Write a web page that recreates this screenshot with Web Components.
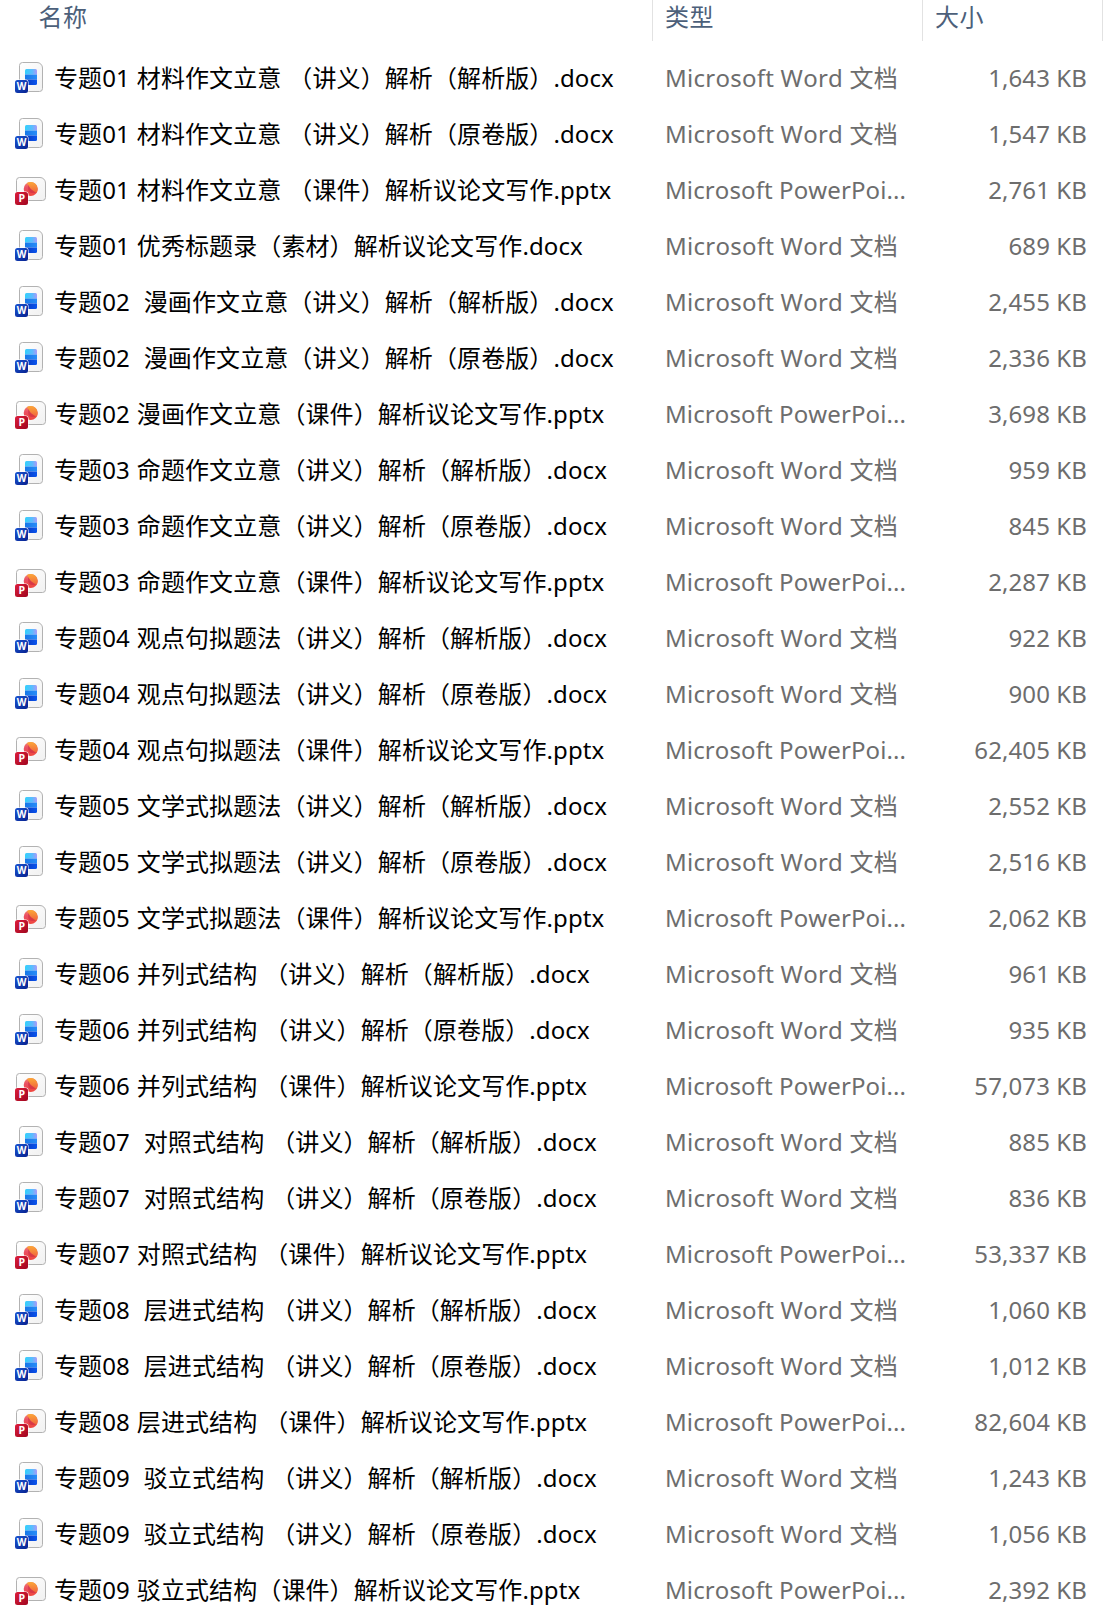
<!DOCTYPE html>
<html lang="zh-CN">
<head>
<meta charset="UTF-8">
<title>文件列表</title>
<style>
    html, body {
        margin: 0;
        height: 100%;
        overflow: hidden;
        background: #fff;
    }

    body {
        font: 24px/34px "Noto Sans", "Noto Sans CJK SC", sans-serif;
        font-kerning: none;
    }
</style>
</head>
<body>
<file-list></file-list>

<script>
/* File type icon: Word page or PowerPoint slide with its letter badge */

class FileIcon extends HTMLElement {
    constructor() {
        super();
        this.attachShadow({ mode: 'open' });
    }

    connectedCallback() {
        const word = `
            <path d="M7.5 11.500H22a5.500 5.500 0 0 1 5.500 5.500v20.500a3 3 0 0 1-3 3h-17a3 3 0 0 1-3-3v-23a3 3 0 0 1 3-3z" fill="url(#page)" stroke="#b2b2b2"/>
            <path d="M10 23.500v-4a1.500 1.500 0 0 1 1.500-1.500h9a1.500 1.500 0 0 1 1.500 1.500v4z" fill="url(#top)"/>
            <path d="M10 23.500h12v5H10z" fill="url(#mid)"/>
            <path d="M10 28.500h12v4a1.500 1.500 0 0 1-1.500 1.500h-9a1.500 1.500 0 0 1-1.500-1.500z" fill="url(#low)"/>
            <rect x="-.5" y="28.500" width="14" height="14" rx="3" fill="#fff"/>
            <rect x="0" y="29" width="13" height="13" rx="2.500" fill="url(#wbadge)"/>
            <text x="6.500" y="39.300" font-size="10">W</text>`;
        const slide = `
            <path d="M4.500 14.500H25a5.500 5.500 0 0 1 5.500 5.500v14.500a3 3 0 0 1-3 3h-23a3 3 0 0 1-3-3v-17a3 3 0 0 1 3-3z" fill="url(#page)" stroke="#b2b2b2"/>
            <circle cx="15.700" cy="26" r="7" fill="url(#pie)"/>
            <path d="M15.700 26l-3.800-5.900A7 7 0 0 1 21.200 30.300z" fill="url(#slice)"/>
            <path d="M15.700 26l-2.500-3.900v4.400a4 4 0 0 0 4 3.500l4-.2z" fill="#c8283c" opacity=".55"/>
            <rect x="-.5" y="28.500" width="14" height="14" rx="3" fill="#fff"/>
            <rect x="0" y="29" width="13" height="13" rx="2.500" fill="url(#pbadge)"/>
            <text x="6.700" y="39.300" font-size="10.500">P</text>`;

        this.shadowRoot.innerHTML = `
            <style>
                :host {
                    display: block;
                    width: 32px;
                    height: 56px;
                }

                svg {
                    display: block;
                    overflow: visible;
                }

                text {
                    font-family: "Open Sans", sans-serif;
                    font-weight: 700;
                    letter-spacing: 0;
                    fill: #fff;
                    text-anchor: middle;
                }
            </style>
            <svg width="32" height="56" viewBox="0 0 32 56">
                <defs>
                    <linearGradient id="page" x1="0" y1="0" x2="1" y2="1"><stop stop-color="#fff"/><stop offset="1" stop-color="#f1f1f1"/></linearGradient>
                    <linearGradient id="top"><stop stop-color="#32d0fb"/><stop offset=".6" stop-color="#5bbcff"/><stop offset="1" stop-color="#a89af8"/></linearGradient>
                    <linearGradient id="mid"><stop stop-color="#1677e8"/><stop offset="1" stop-color="#288cf8"/></linearGradient>
                    <linearGradient id="low"><stop stop-color="#0638c0"/><stop offset="1" stop-color="#0a55ee"/></linearGradient>
                    <linearGradient id="wbadge" x1="0" y1="0" x2="1" y2="1"><stop stop-color="#1c55d0"/><stop offset="1" stop-color="#06218f"/></linearGradient>
                    <linearGradient id="pie" x1="0" y1="0" x2="0" y2="1"><stop stop-color="#f4856c"/><stop offset=".4" stop-color="#ea5064"/><stop offset="1" stop-color="#f0463c"/></linearGradient>
                    <linearGradient id="slice" x1="0" y1="0" x2="0" y2="1"><stop stop-color="#fba838"/><stop offset="1" stop-color="#f0603c"/></linearGradient>
                    <linearGradient id="pbadge" x1="0" y1="0" x2="1" y2="1"><stop stop-color="#dc1e3c"/><stop offset="1" stop-color="#a0061e"/></linearGradient>
                </defs>
                ${this.getAttribute('kind') === 'docx' ? word : slide}
            </svg>
        `;
    }
}

customElements.define('file-icon', FileIcon);

/* Column headings */

class ListHeader extends HTMLElement {
    constructor() {
        super();
        this.attachShadow({ mode: 'open' });
        this.shadowRoot.innerHTML = `
            <style>
                :host {
                    display: grid;
                    grid-template-columns: 653px 270px 180px;
                    height: 41px;
                    margin-bottom: 10px;
                    color: #4c607a;
                    letter-spacing: 0.4px;
                }

                div {
                    box-sizing: border-box;
                    border-right: 1px solid #e2e2e2;
                    padding-left: 12px;
                }

                .name {
                    padding-left: 38.5px;
                }
            </style>
            <div class="name">名称</div>
            <div>类型</div>
            <div>大小</div>
        `;
    }
}

customElements.define('list-header', ListHeader);

/* One file: icon, name (slotted), type and size */

class FileRow extends HTMLElement {
    constructor() {
        super();
        this.attachShadow({ mode: 'open' });
    }

    connectedCallback() {
        const kind = this.getAttribute('kind');
        const type = kind === 'docx' ? 'Microsoft Word 文档' : 'Microsoft PowerPoi...';

        this.shadowRoot.innerHTML = `
            <style>
                :host {
                    display: grid;
                    grid-template-columns: 15px 39px 611px 270px 152px;
                    height: 56px;
                    line-height: 54px;
                    color: #6d6d6d;
                    letter-spacing: 0.1px;
                }

                file-icon {
                    grid-column: 2;
                }

                .name {
                    color: #000;
                    white-space: pre;
                    word-spacing: 0.6px;
                }

                .type {
                    white-space: nowrap;
                }

                .type.docx {
                    letter-spacing: 0.25px;
                }

                .size {
                    text-align: right;
                }
            </style>
            <file-icon kind="${kind}"></file-icon>
            <div class="name"><slot></slot></div>
            <div class="type ${kind}">${type}</div>
            <div class="size">${this.getAttribute('size')} KB</div>
        `;
    }
}

customElements.define('file-row', FileRow);

const files = [
    ['专题01 材料作文立意 （讲义）解析（解析版）.docx', '1,643'],
    ['专题01 材料作文立意 （讲义）解析（原卷版）.docx', '1,547'],
    ['专题01 材料作文立意 （课件）解析议论文写作.pptx', '2,761'],
    ['专题01 优秀标题录（素材）解析议论文写作.docx', '689'],
    ['专题02  漫画作文立意（讲义）解析（解析版）.docx', '2,455'],
    ['专题02  漫画作文立意（讲义）解析（原卷版）.docx', '2,336'],
    ['专题02 漫画作文立意（课件）解析议论文写作.pptx', '3,698'],
    ['专题03 命题作文立意（讲义）解析（解析版）.docx', '959'],
    ['专题03 命题作文立意（讲义）解析（原卷版）.docx', '845'],
    ['专题03 命题作文立意（课件）解析议论文写作.pptx', '2,287'],
    ['专题04 观点句拟题法（讲义）解析（解析版）.docx', '922'],
    ['专题04 观点句拟题法（讲义）解析（原卷版）.docx', '900'],
    ['专题04 观点句拟题法（课件）解析议论文写作.pptx', '62,405'],
    ['专题05 文学式拟题法（讲义）解析（解析版）.docx', '2,552'],
    ['专题05 文学式拟题法（讲义）解析（原卷版）.docx', '2,516'],
    ['专题05 文学式拟题法（课件）解析议论文写作.pptx', '2,062'],
    ['专题06 并列式结构 （讲义）解析（解析版）.docx', '961'],
    ['专题06 并列式结构 （讲义）解析（原卷版）.docx', '935'],
    ['专题06 并列式结构 （课件）解析议论文写作.pptx', '57,073'],
    ['专题07  对照式结构 （讲义）解析（解析版）.docx', '885'],
    ['专题07  对照式结构 （讲义）解析（原卷版）.docx', '836'],
    ['专题07 对照式结构 （课件）解析议论文写作.pptx', '53,337'],
    ['专题08  层进式结构 （讲义）解析（解析版）.docx', '1,060'],
    ['专题08  层进式结构 （讲义）解析（原卷版）.docx', '1,012'],
    ['专题08 层进式结构 （课件）解析议论文写作.pptx', '82,604'],
    ['专题09  驳立式结构 （讲义）解析（解析版）.docx', '1,243'],
    ['专题09  驳立式结构 （讲义）解析（原卷版）.docx', '1,056'],
    ['专题09 驳立式结构（课件）解析议论文写作.pptx', '2,392']
];

class FileList extends HTMLElement {
    constructor() {
        super();
        this.attachShadow({ mode: 'open' });
    }

    connectedCallback() {
        this.shadowRoot.innerHTML = `
            <style>
                :host {
                    display: block;
                    height: 1614px;
                    overflow: hidden;
                }
            </style>
            <list-header></list-header>
            ${files.map(([name, size]) => `<file-row kind="${name.split('.').pop()}" size="${size}">${name}</file-row>`).join('')}
        `;
    }
}

customElements.define('file-list', FileList);
</script>
</body>
</html>
